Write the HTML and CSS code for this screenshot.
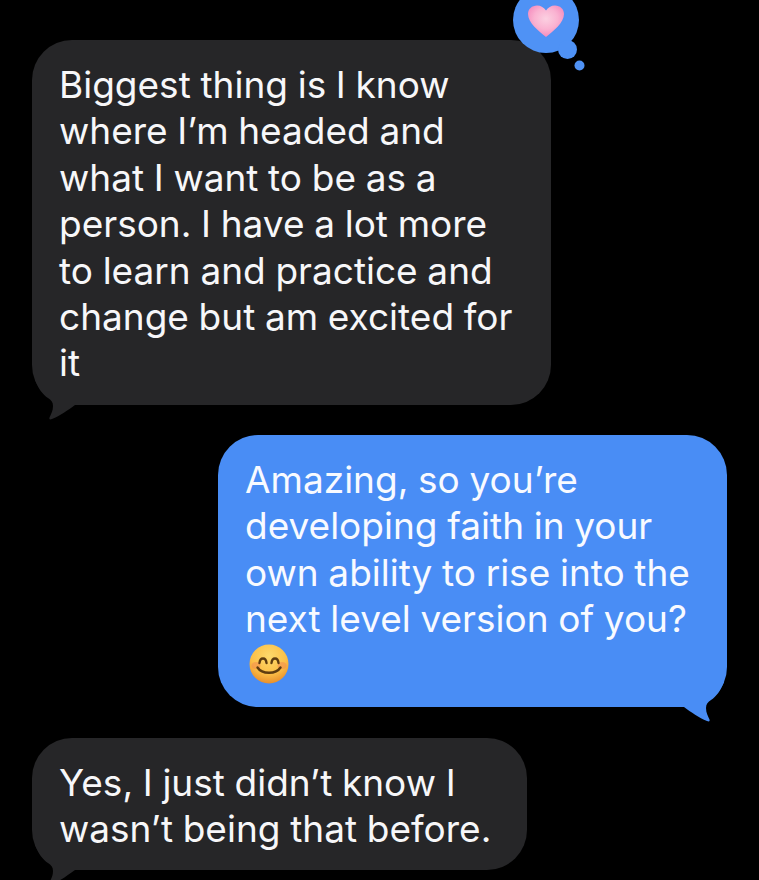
FILE: index.html
```html
<!DOCTYPE html>
<html lang="en">

<head>
    <meta charset="UTF-8">
    <meta name="viewport" content="width=device-width, initial-scale=1.0">
    <title>Messages</title>
    <link rel="stylesheet" href="styles.css">
</head>

<body>
    <div class="thread">
        <div class="bubble incoming first">
            Biggest thing is I know<br>
            where I’m headed and<br>
            what I want to be as a<br>
            person. I have a lot more<br>
            to learn and practice and<br>
            change but am excited for<br>
            it
            <svg class="tail tail-left" viewBox="0 0 50 40">
                <path d="M3 0C6 8 11 15 16 18C19 20 21 22 21 26C21 31 19 34 17.500 37.500C17 39.500 18 39.800 20 39C28 36 36 30 43 25L43 0Z" />
            </svg>
            <!-- heart tapback -->
            <svg class="tapback" viewBox="0 0 80 80">
                <defs>
                    <radialGradient id="heart" cx="0.5" cy="0.42" r="0.6">
                        <stop offset="0" stop-color="#fbd0e1" />
                        <stop offset="0.55" stop-color="#fab2d1" />
                        <stop offset="1" stop-color="#f488bc" />
                    </radialGradient>
                </defs>
                <circle class="tapback-fill" cx="33" cy="33" r="33" />
                <circle class="tapback-fill" cx="54.500" cy="62.500" r="9.500" />
                <circle class="tapback-fill" cx="66.500" cy="78.500" r="5" />
                <path fill="url(#heart)" d="M33 50C26 44 15 36 15 27C15 22 19 18.500 24 18.500C28 18.500 31 20.500 33 23.500C35 20.500 38 18.500 42 18.500C47 18.500 51 22 51 27C51 36 40 44 33 50Z" />
            </svg>
        </div>

        <div class="bubble outgoing">
            Amazing, so you’re<br>
            developing faith in your<br>
            own ability to rise into the<br>
            next level version of you?<br>
            <svg class="emoji" viewBox="0 0 40 40">
                <defs>
                    <radialGradient id="face" cx="0.5" cy="0.3" r="0.75">
                        <stop offset="0" stop-color="#fdd96c" />
                        <stop offset="0.6" stop-color="#fbbf47" />
                        <stop offset="1" stop-color="#e58526" />
                    </radialGradient>
                </defs>
                <circle cx="20" cy="20" r="19.500" fill="url(#face)" />
                <ellipse class="blush" cx="7" cy="21.500" rx="4.500" ry="3.500" />
                <ellipse class="blush" cx="33" cy="21.500" rx="4.500" ry="3.500" />
                <path class="face-line" d="M10.500 19C11 13 17 13 17.500 19" />
                <path class="face-line" d="M22.500 19C23 13 29 13 29.500 19" />
                <path class="face-line" d="M8.500 23.500C13 30.500 27 30.500 31.500 23.500" />
            </svg>
            <svg class="tail tail-right" viewBox="0 0 50 40">
                <path d="M3 0C6 8 11 15 16 18C19 20 21 22 21 26C21 31 19 34 17.500 37.500C17 39.500 18 39.800 20 39C28 36 36 30 43 25L43 0Z" />
            </svg>
        </div>

        <div class="bubble incoming last">
            Yes, I just didn’t know I<br>
            wasn’t being that before.
            <svg class="tail tail-left" viewBox="0 0 50 40">
                <path d="M3 0C6 8 11 15 16 18C19 20 21 22 21 26C21 31 19 34 17.500 37.500C17 39.500 18 39.800 20 39C28 36 36 30 43 25L43 0Z" />
            </svg>
        </div>
    </div>
</body>

</html>
```

FILE: styles.css
```css
html,
body {
    margin: 0;
    height: 100%;
    background-color: #000;
    overflow: hidden;
}

.thread {
    display: flex;
    flex-direction: column;
    padding: 40px 32px 0;
    font-family: Inter, "Liberation Sans", sans-serif;
    font-size: 37px;
    line-height: 46.4px;
    word-spacing: -0.7px;
}

.bubble {
    position: relative;
    box-sizing: border-box;
    padding: 22px 27px 17px;
    border-radius: 40px;
    white-space: nowrap;
}

.incoming {
    align-self: flex-start;
    background-color: #262628;
    color: #f7f7f9;
}

.incoming .tail path {
    fill: #262628;
}

.outgoing {
    align-self: flex-end;
    width: 509px;
    height: 272px;
    margin: 30px 0 31px;
    background-color: #498df5;
    color: #f8faff;
}

.outgoing .tail path {
    fill: #498df5;
}

.first {
    width: 519px;
    height: 365px;
}

.last {
    width: 495px;
    height: 132px;
}

.tail {
    position: absolute;
    bottom: -15px;
    width: 50px;
    height: 40px;
}

.tail-left {
    left: 0;
}

.tail-right {
    right: 0;
    transform: scaleX(-1);
}

/* sits over the top right corner of the first bubble */
.tapback {
    position: absolute;
    top: -53px;
    left: 481px;
    width: 80px;
    height: 80px;
    overflow: visible;
}

.tapback-fill {
    fill: #4f92f5;
}

.emoji {
    display: block;
    width: 40px;
    height: 40px;
    margin-top: 1px;
    margin-left: 4px;
}

.blush {
    fill: #f28a50;
    opacity: 0.55;
}

.face-line {
    fill: none;
    stroke: #5e3c10;
    stroke-width: 2.4;
    stroke-linecap: round;
}
```
